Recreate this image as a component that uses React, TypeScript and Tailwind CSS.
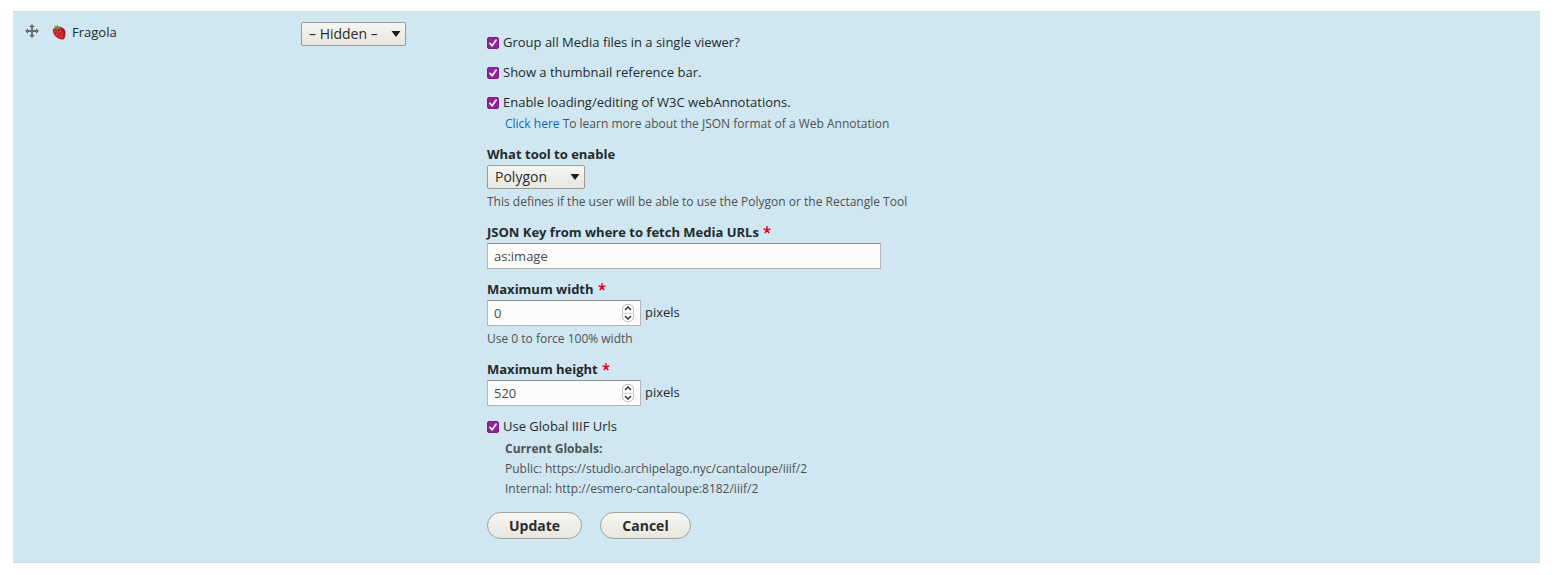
import { useState } from "react";
import type { ReactNode } from "react";

function Check({ id, label, children }: { id: string; label: string; children?: ReactNode }) {
  return (
    <div>
      <div className="flex h-5 items-center gap-1">
        <span className="relative mt-px h-3 w-3 shrink-0">
          <input
            id={id}
            type="checkbox"
            defaultChecked
            className="peer block h-3 w-3 appearance-none rounded-[2px] border border-[#8a8a8a] bg-white checked:border-[#86198f] checked:bg-[#8f2299]"
          />
          <svg
            viewBox="0 0 12 12"
            className="pointer-events-none absolute inset-0 hidden h-3 w-3 peer-checked:block"
            fill="none"
            stroke="#fff"
            strokeWidth="1.7"
            strokeLinecap="round"
            strokeLinejoin="round"
          >
            <path d="M3 6.4 5.2 8.8 9.1 3.1" />
          </svg>
        </span>
        <label htmlFor={id} className="whitespace-nowrap">{label}</label>
      </div>
      {children}
    </div>
  );
}

function Label({ htmlFor, required, children }: { htmlFor: string; required?: boolean; children: ReactNode }) {
  return (
    <label htmlFor={htmlFor} className="flex items-center gap-1 pb-px font-bold leading-5">
      {children}
      {required && (
        <svg viewBox="0 0 8 8" className="mb-1 h-2 w-2" stroke="#e60012" strokeWidth="1.5" aria-hidden="true">
          <path d="M4 4V.3M4 4 .5 2.9M4 4 7.5 2.9M4 4 1.8 7.2M4 4 6.2 7.2" />
        </svg>
      )}
    </label>
  );
}

function Description({ children }: { children: ReactNode }) {
  return <p className="text-xs leading-5 text-[#4d5254]">{children}</p>;
}

function Select({ id, label, options, className }: { id: string; label?: string; options: string[]; className: string }) {
  return (
    <div className={`relative h-6 ${className}`}>
      <select
        id={id}
        aria-label={label}
        className="h-6 w-full appearance-none rounded-[2px] border border-[#999] bg-linear-to-b from-[#f6f6f3] to-[#e7e7df] pl-[7px] text-sm leading-5 text-[#2b2b2b]"
      >
        {options.map((o) => (
          <option key={o}>{o}</option>
        ))}
      </select>
      <svg viewBox="0 0 10 6" className="pointer-events-none absolute top-[9px] right-[5px] h-1.5 w-2.5" fill="#1d1d1d">
        <path d="M.5 0h9L5 6z" />
      </svg>
    </div>
  );
}

const field =
  "block h-[26px] w-full appearance-none rounded-[1px] border border-[#b3b3b3] border-t-[#8f8f8f] bg-[#fcfcfa] px-[6px] text-[13px] text-[#4a4a4a]";

function PixelField({ id, label, initial }: { id: string; label: string; initial: number }) {
  const [value, setValue] = useState(initial);
  return (
    <>
      <Label htmlFor={id} required>{label}</Label>
      <div className="flex items-start gap-1">
        <div className="relative w-[154px]">
          <input
            id={id}
            type="number"
            value={value}
            onChange={(e) => setValue(Number(e.target.value))}
            className={`${field} [appearance:textfield] [&::-webkit-inner-spin-button]:appearance-none`}
          />
          <div className="absolute top-1 right-[7px] flex h-[18px] w-3 flex-col rounded-[5px] border border-[#c4c4c4] bg-white">
            <button type="button" aria-label="Increase" onClick={() => setValue(value + 1)} className="flex flex-1 items-center justify-center border-b border-[#d8d8d8]">
              <svg viewBox="0 0 8 5" className="h-[5px] w-2" fill="none" stroke="#333" strokeWidth="1.5"><path d="M1 4 4 1l3 3" /></svg>
            </button>
            <button type="button" aria-label="Decrease" onClick={() => setValue(value - 1)} className="flex flex-1 items-center justify-center">
              <svg viewBox="0 0 8 5" className="h-[5px] w-2" fill="none" stroke="#333" strokeWidth="1.5"><path d="m1 1 3 3 3-3" /></svg>
            </button>
          </div>
        </div>
        <span className="leading-6">pixels</span>
      </div>
    </>
  );
}

function ActionButton({ children, className }: { children: ReactNode; className: string }) {
  return (
    <button
      type="button"
      className={`h-[27px] rounded-full border border-[#a0a0a0] bg-linear-to-b from-[#f6f6f3] to-[#e7e7df] text-sm font-bold text-[#2b2b2b] ${className}`}
    >
      {children}
    </button>
  );
}

function Strawberry() {
  return (
    <svg viewBox="0 0 14 16" className="h-4 w-3.5" aria-hidden="true">
      <path d="M1 5.500C2.500 2.800 6 3 8 3.100c3 .2 5.400 2 5.500 5.400.1 3-.4 6.300-2.200 6.900C8.500 16.200 4 13.500 2 10.500 1 8.800.500 7 1 5.500Z" fill="#c5202a" />
      <path d="M9 4c2.500.700 4 2.400 4 5 0 3-.8 5.300-2 5.800C11.800 11 11.500 7 9 4Z" fill="#9f1722" />
      <path d="M1 5.200 3 3.300 2.200 1.600l2 .8L5.600.5l.3 2L9 2.200 7.300 3.700l1.500 1.700-3-.6-1 1.800-1-1.900Z" fill="#6f8b35" />
      <g fill="#ee8c72">
        <circle cx="3" cy="7.500" r=".5" /><circle cx="5.600" cy="8" r=".5" /><circle cx="8.300" cy="7.500" r=".5" />
        <circle cx="4.500" cy="10.500" r=".5" /><circle cx="7.200" cy="10.800" r=".5" /><circle cx="9.500" cy="12.500" r=".5" /><circle cx="10.600" cy="9.300" r=".5" />
      </g>
    </svg>
  );
}

export default function App() {
  return (
    <main className="bg-white pt-[11px] pr-[15px] pl-[13px] font-['Open_Sans','Noto_Sans',sans-serif] text-[13px] leading-5 text-[#232b2e]">
      <section className="grid grid-cols-[288px_186px_1fr] border-y border-[#d3dde1] bg-[#d0e6f0] pt-2.5 pb-[23px]">
        <div className="flex h-5 items-center pl-3">
          <button type="button" aria-label="Drag to re-order" className="mr-[13px] -mt-0.5 cursor-move">
            <svg viewBox="0 0 14 14" className="h-3.5 w-3.5" fill="#6a6d6e">
              <path d="M7 0 9.800 3H8v3h3V4.200L14 7l-3 2.800V8H8v3h1.800L7 14l-2.800-3H6V8H3v1.800L0 7l3-2.800V6h3V3H4.200Z" />
            </svg>
          </button>
          <Strawberry />
          <span className="ml-1.5">Fragola</span>
        </div>
        <Select id="region" label="Label display" options={["– Hidden –", "Above", "Inline"]} className="w-[105px]" />
        <form className="flex flex-col gap-2.5 pt-2.5" onSubmit={(e) => e.preventDefault()}>
          <Check id="group" label="Group all Media files in a single viewer?" />
          <Check id="thumbs" label="Show a thumbnail reference bar." />
          <Check id="annotations" label="Enable loading/editing of W3C webAnnotations.">
            <div className="pt-0.5 pl-[18px]">
              <Description>
                <a href="#annotations" className="text-[#0f69b4]">Click here</a> To learn more about the JSON format of a Web Annotation
              </Description>
            </div>
          </Check>
          <div>
            <Label htmlFor="tool">What tool to enable</Label>
            <Select id="tool" options={["Polygon", "Rectangle"]} className="mb-[3px] w-[98px]" />
            <Description>This defines if the user will be able to use the Polygon or the Rectangle Tool</Description>
          </div>
          <div>
            <Label htmlFor="key" required>JSON Key from where to fetch Media URLs</Label>
            <div className="max-w-[394px]">
              <input id="key" type="text" defaultValue="as:image" className={field} />
            </div>
          </div>
          <div>
            <PixelField id="width" label="Maximum width" initial={0} />
            <div className="pt-[3px]">
              <Description>Use 0 to force 100% width</Description>
            </div>
          </div>
          <div>
            <PixelField id="height" label="Maximum height" initial={520} />
          </div>
          <Check id="iiif" label="Use Global IIIF Urls">
            <div className="pt-[3px] pl-[18px] text-xs leading-5 text-[#4d5254]">
              <p className="font-bold">Current Globals:</p>
              <p>Public: https://studio.archipelago.nyc/cantaloupe/iiif/2</p>
              <p>Internal: http://esmero-cantaloupe:8182/iiif/2</p>
            </div>
          </Check>
          <div className="flex gap-[18px] pt-[3px]">
            <ActionButton className="w-[95px]">Update</ActionButton>
            <ActionButton className="w-[91px]">Cancel</ActionButton>
          </div>
        </form>
      </section>
    </main>
  );
}
